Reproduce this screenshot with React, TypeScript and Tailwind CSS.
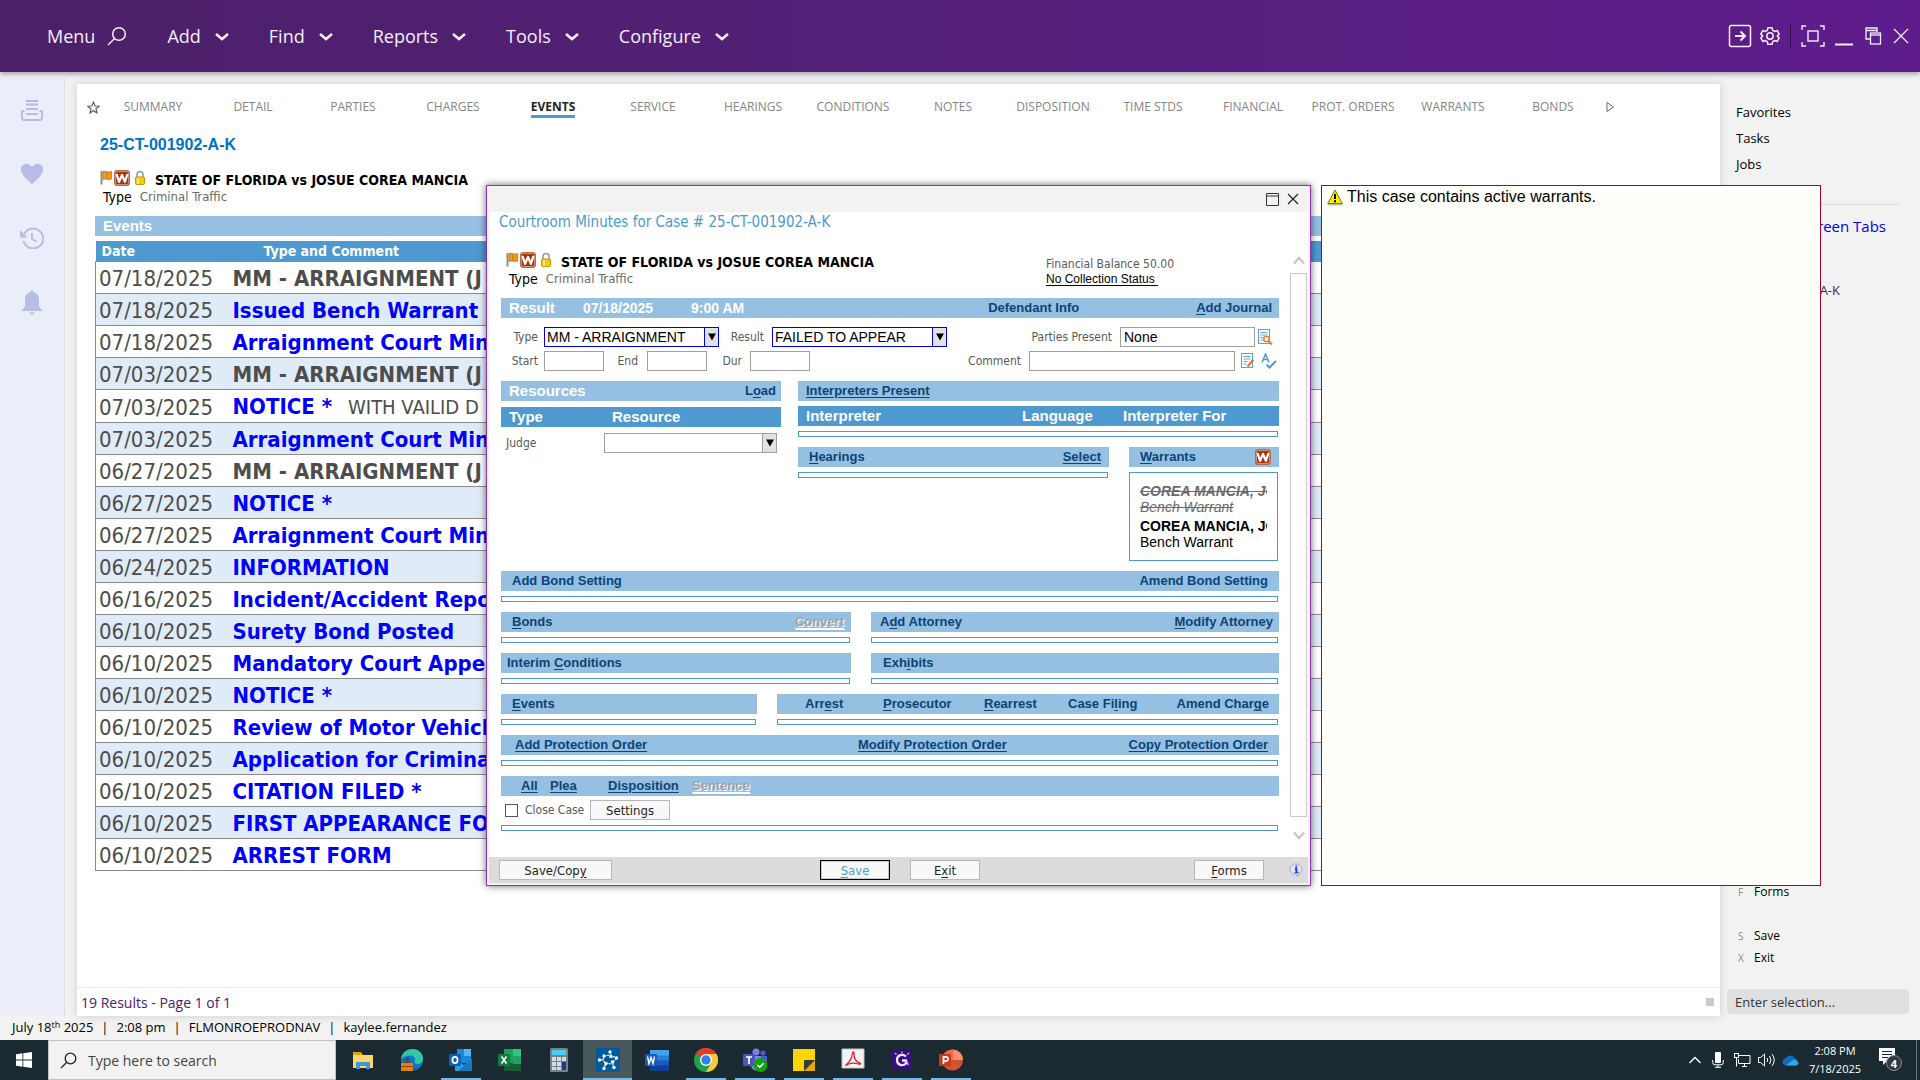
import type { ReactNode } from 'react';

import clsx from 'clsx';

const TABS = [
  'SUMMARY',
  'DETAIL',
  'PARTIES',
  'CHARGES',
  'EVENTS',
  'SERVICE',
  'HEARINGS',
  'CONDITIONS',
  'NOTES',
  'DISPOSITION',
  'TIME STDS',
  'FINANCIAL',
  'PROT. ORDERS',
  'WARRANTS',
  'BONDS',
];

const MENUS = ['Add', 'Find', 'Reports', 'Tools', 'Configure'];

type EventRow = { date: string; title: string; comment?: string; plain?: boolean };

const EVENTS: EventRow[] = [
  { date: '07/18/2025', title: 'MM - ARRAIGNMENT (J', plain: true },
  { date: '07/18/2025', title: 'Issued Bench Warrant' },
  { date: '07/18/2025', title: 'Arraignment Court Min' },
  { date: '07/03/2025', title: 'MM - ARRAIGNMENT (J', plain: true },
  { date: '07/03/2025', title: 'NOTICE *', comment: 'WITH VAILID D' },
  { date: '07/03/2025', title: 'Arraignment Court Min' },
  { date: '06/27/2025', title: 'MM - ARRAIGNMENT (J', plain: true },
  { date: '06/27/2025', title: 'NOTICE *' },
  { date: '06/27/2025', title: 'Arraignment Court Min' },
  { date: '06/24/2025', title: 'INFORMATION' },
  { date: '06/16/2025', title: 'Incident/Accident Repo' },
  { date: '06/10/2025', title: 'Surety Bond Posted' },
  { date: '06/10/2025', title: 'Mandatory Court Appea' },
  { date: '06/10/2025', title: 'NOTICE *' },
  { date: '06/10/2025', title: 'Review of Motor Vehicl' },
  { date: '06/10/2025', title: 'Application for Crimina' },
  { date: '06/10/2025', title: 'CITATION FILED *' },
  { date: '06/10/2025', title: 'FIRST APPEARANCE FO' },
  { date: '06/10/2025', title: 'ARREST FORM' },
];

// "&" marks the access key letter
function Mnemonic({ text }: { text: string }) {
  const at = text.indexOf('&');
  if (at < 0) return <>{text}</>;
  return (
    <>
      {text.slice(0, at)}
      <span className="underline underline-offset-2">{text[at + 1]}</span>
      {text.slice(at + 2)}
    </>
  );
}

function BarLink({
  text,
  underlined,
  disabled,
}: {
  text: string;
  underlined?: boolean;
  disabled?: boolean;
}) {
  return (
    <a
      href="#"
      className={clsx(
        'justify-self-start text-[13px] leading-5 font-bold whitespace-nowrap',
        disabled
          ? 'text-[#a3a3a3] decoration-white [text-shadow:1px_1px_0_#fff]'
          : 'text-[#0b4475]',
        underlined && 'underline underline-offset-2',
      )}
    >
      <Mnemonic text={text} />
    </a>
  );
}

function Bar({ className, children }: { className?: string; children?: ReactNode }) {
  return <div className={clsx('h-5 items-center bg-[#95c0e2]', className)}>{children}</div>;
}

function Strip() {
  return <div className="mt-[5px] mr-px h-[6px] border border-[#4e99cf]" />;
}

function DropDown({
  id,
  value,
  required,
  className,
}: {
  id: string;
  value: string;
  required?: boolean;
  className?: string;
}) {
  const edge = required ? 'border-[#0000e6]' : 'border-[#a0a0a0]';
  return (
    <div className={clsx('flex h-5 border bg-white', edge, className)}>
      <select
        id={id}
        defaultValue={value}
        className="min-w-0 flex-1 appearance-none pl-[2px] text-[14px] leading-[18px] text-black outline-none"
      >
        <option value={value}>{value}</option>
      </select>
      <span
        className={clsx(
          'pointer-events-none flex w-[14px] items-center justify-center border-l bg-[#e1e1e6]',
          edge,
        )}
      >
        <svg width="8" height="8" viewBox="0 0 8 8">
          <path d="M0 0.5h8L4 7.5z" fill="#000" />
        </svg>
      </span>
    </div>
  );
}

function TextBox({ id, value, className }: { id: string; value?: string; className?: string }) {
  return (
    <input
      id={id}
      type="text"
      defaultValue={value}
      className={clsx(
        'h-5 border border-[#a0a0a0] bg-white pl-[3px] text-[14px] text-black outline-none',
        className,
      )}
    />
  );
}

function Label({
  htmlFor,
  className,
  children,
}: {
  htmlFor: string;
  className?: string;
  children: ReactNode;
}) {
  return (
    <label
      htmlFor={htmlFor}
      className={clsx(
        "font-['DejaVu_Sans_Condensed','Noto_Sans',sans-serif] text-[12px] leading-5 whitespace-nowrap text-[#5a5a5a]",
        className,
      )}
    >
      {children}
    </label>
  );
}

function PushButton({
  text,
  className,
  primary,
}: {
  text: string;
  className?: string;
  primary?: boolean;
}) {
  return (
    <button
      type="button"
      className={clsx(
        "h-5 border bg-[#f8f8f8] pt-px font-['DejaVu_Sans_Condensed','Noto_Sans',sans-serif] text-[13px] leading-[17px]",
        primary
          ? 'border-black text-[#4aa0e0] ring-1 ring-[#c8c8c8] ring-inset'
          : 'border-[#b8b8b8] text-[#222]',
        className,
      )}
    >
      <Mnemonic text={text} />
    </button>
  );
}

function WarrantIcon() {
  return (
    <svg width="16" height="16" viewBox="0 0 16 16">
      <rect x="0.5" y="0.5" width="15" height="15" rx="2.5" fill="#a5360f" stroke="#b5694e" />
      <rect x="1.500" y="1.500" width="13" height="13" rx="1.500" fill="none" stroke="#e0b3a2" strokeWidth="0.700" />
      <path
        d="M2.500 4l2.600 7.800L8 5l2.900 6.800L13.500 4"
        fill="none"
        stroke="#fff"
        strokeWidth="2.200"
        strokeLinejoin="round"
      />
    </svg>
  );
}

function FlagIcon() {
  return (
    <svg width="13" height="16" viewBox="0 0 13 16">
      <path d="M1.500 1v13.500" stroke="#8d8d85" strokeWidth="2" />
      <path d="M3 1.500c2-1 4 1.500 8.500 0v7.500c-3 1.500-5-1-8.500 0.500z" fill="#f09a1c" stroke="#b76a0c" strokeWidth="0.700" />
      <path d="M7 2v7" stroke="#c9750c" />
    </svg>
  );
}

function LockIcon() {
  return (
    <svg width="12" height="16" viewBox="0 0 12 16">
      <path d="M3 8V4.500a3 3 0 0 1 6 0V8" fill="none" stroke="#9b9b9b" strokeWidth="1.600" />
      <rect x="1.500" y="7" width="9" height="7.500" rx="1" fill="#f3cc12" stroke="#c79a05" />
      <path d="M4 8v6" stroke="#fbef9b" strokeWidth="1.500" />
    </svg>
  );
}

function CaseHeading() {
  return (
    <div className="font-['DejaVu_Sans_Condensed','Noto_Sans',sans-serif]">
      <div className="flex h-[18px] items-start">
        <FlagIcon />
        <span className="ml-px">
          <WarrantIcon />
        </span>
        <span className="ml-1">
          <LockIcon />
        </span>
        <span className="ml-[9px] pt-[2px] text-[14px] leading-4 font-bold whitespace-nowrap text-black">
          STATE OF FLORIDA vs JOSUE COREA MANCIA
        </span>
      </div>
      <div className="flex gap-2 pl-[3px] text-[14px] leading-[18px]">
        <span className="text-black">Type</span>
        <span className="text-[13px] text-[#6a6a6a]">Criminal Traffic</span>
      </div>
    </div>
  );
}

function TopBar() {
  return (
    <header className="relative z-10 flex h-[72px] items-center justify-between bg-linear-to-r from-[#4b2068] to-[#5e1c8c] pr-2 pl-[47px] text-[#f4effa] shadow-[0_2px_5px_rgba(0,0,0,0.35)]">
      <nav className="flex items-center gap-10 text-[18px] leading-6">
        <button type="button" className="flex items-center gap-3">
          Menu
          <svg width="20" height="20" viewBox="0 0 20 20" fill="none" stroke="currentColor" strokeWidth="1.500">
            <circle cx="12" cy="8" r="6.300" />
            <path d="M7.500 12.500L1 19" />
          </svg>
        </button>
        {MENUS.map((m) => (
          <button type="button" key={m} className="flex items-center gap-[14px]">
            {m}
            <svg width="14" height="9" viewBox="0 0 14 9" fill="none" stroke="currentColor" strokeWidth="2.500">
              <path d="M1 2l6 5 6-5" />
            </svg>
          </button>
        ))}
      </nav>
      <div className="flex items-center">
        <button type="button" aria-label="Sign out">
          <svg width="24" height="24" viewBox="0 0 24 24" fill="none" stroke="currentColor" strokeWidth="1.500">
            <rect x="1.500" y="1.500" width="21" height="21" rx="2" />
            <path d="M7 12h10M12.500 7.500L17 12l-4.500 4.500" strokeWidth="2" />
          </svg>
        </button>
        <button type="button" aria-label="Settings" className="ml-2">
          <svg width="20" height="20" viewBox="0 0 24 24" fill="none" stroke="currentColor" strokeWidth="1.800">
            <path d="M9.500 2h5l.8 3.200 2.200 1.300 3.200-1L23 9.800l-2.300 2.200L23 14.300l-2.300 4.200-3.200-1-2.200 1.300-.8 3.200h-5l-.8-3.200-2.200-1.300-3.200 1L1 14.300 3.300 12 1 9.800l2.300-4.300 3.200 1 2.200-1.300z" strokeLinejoin="round" />
            <circle cx="12" cy="12" r="3.800" />
          </svg>
        </button>
        <span className="mx-[10px] h-6 w-px bg-[#33104f]" />
        <button type="button" aria-label="Full screen">
          <svg width="24" height="22" viewBox="0 0 24 22" fill="none" stroke="currentColor" strokeWidth="1.400">
            <path d="M1 5V1h4M19 1h4v4M23 17v4h-4M5 21H1v-4" />
            <rect x="7" y="6" width="10" height="10" />
          </svg>
        </button>
        <button type="button" aria-label="Minimize" className="ml-[10px]">
          <svg width="18" height="20" viewBox="0 0 18 20">
            <path d="M0 18.500h18" stroke="currentColor" strokeWidth="2" />
          </svg>
        </button>
        <button type="button" aria-label="Restore" className="ml-3">
          <svg width="17" height="18" viewBox="0 0 17 18" fill="none" stroke="currentColor" strokeWidth="1.300">
            <path d="M5 12H1V1h11v4M1 3.500h11" />
            <rect x="5.500" y="6" width="10" height="11" />
            <path d="M5.500 8h10" />
          </svg>
        </button>
        <button type="button" aria-label="Close" className="ml-2 px-[3px]">
          <svg width="16" height="16" viewBox="0 0 16 16">
            <path d="M1 1l14 14M15 1L1 15" stroke="currentColor" strokeWidth="1.300" />
          </svg>
        </button>
      </div>
    </header>
  );
}

function SideRail() {
  return (
    <aside className="mt-[6px] flex w-[65px] shrink-0 flex-col items-center border-r border-[#dfe0e6] bg-[#ebedf8] pt-[22px] text-[#b6bee6]">
      <svg width="22" height="21" viewBox="0 0 22 21" fill="none" stroke="currentColor" strokeWidth="2">
        <path d="M5 1h12M5 4.500h12M5 9h12M5 14h12" />
        <path d="M3.500 11H1v7q0 2 2 2h16q2 0 2-2v-7h-2.500" />
      </svg>
      <svg width="24" height="22" viewBox="0 0 26 23" className="mt-[42px]">
        <path d="M13 22.500C6 16 1 12 1 6.500 1 3 3.500 0.500 7 0.500c2.500 0 4.700 1.500 6 3.500 1.300-2 3.500-3.500 6-3.500 3.500 0 6 2.500 6 6C25 12 20 16 13 22.500z" fill="currentColor" />
      </svg>
      <svg width="24" height="22" viewBox="0 0 24 22" fill="none" stroke="currentColor" strokeWidth="2" className="mt-[42px]">
        <path d="M4 7.500A10 10 0 1 1 3.500 14" />
        <path d="M0 3v7.500h7.500z" fill="currentColor" stroke="none" />
        <path d="M12 6v6l4.500 2.500" />
      </svg>
      <svg width="22" height="25" viewBox="0 0 22 25" fill="currentColor" className="mt-[41px]">
        <path d="M11 0.500c1 0 1.700.7 1.700 1.700C16.500 3 18 6 18 10v6l3.500 5H.5l3.500-5v-6c0-4 1.500-7 5.300-7.800 0-1 .7-1.700 1.700-1.700z" />
        <path d="M8.500 22.500h5c0 1.200-1 2-2.500 2s-2.500-.8-2.500-2z" />
      </svg>
    </aside>
  );
}

function TabStrip() {
  return (
    <nav className="flex h-[46px] items-center text-[12px] leading-4 text-[#858585]">
      <span className="flex w-[26px] justify-end pr-[3px]">
        <svg width="13" height="13" viewBox="0 0 24 24" fill="none" stroke="#555" strokeWidth="2">
          <path d="M12 2l2.900 7.200 7.600.6-5.900 4.900 1.900 7.500L12 18l-6.500 4.200 1.900-7.500L1.500 9.800l7.600-.6z" />
        </svg>
      </span>
      {TABS.map((t) => (
        <span key={t} className="flex w-[100px] shrink-0 justify-center">
          <a
            href="#"
            className={clsx(
              'border-b-[3px] pt-[3px] whitespace-nowrap',
              t === 'EVENTS' ? 'border-[#4e99cf] font-bold text-[#222]' : 'border-transparent',
            )}
          >
            {t}
          </a>
        </span>
      ))}
      <svg width="9" height="12" viewBox="0 0 9 12" fill="none" stroke="#666" className="ml-[3px]">
        <path d="M1 1.500v9L7.500 6z" />
      </svg>
    </nav>
  );
}

function EventsTable() {
  return (
    <table className="mt-[5px] w-full table-fixed border-collapse font-['DejaVu_Sans_Condensed','Noto_Sans',sans-serif]">
      <thead>
        <tr className="h-5 bg-[#4e99cf] text-left text-[14px] leading-5 text-white">
          <th className="w-[134px] p-0 pl-[6px]">Date</th>
          <th className="p-0 pl-[34px]">Type and Comment</th>
        </tr>
      </thead>
      <tbody>
        {EVENTS.map((e, i) => (
          <tr
            key={i}
            className="h-8 border border-[#8a8a8a] text-[22px] leading-[29px] text-[#4d4d4d] even:bg-[#dfebf6]"
          >
            <td className="p-0 pt-[2px] pl-[3px]">{e.date}</td>
            <td className="overflow-hidden p-0 pt-[2px] pl-[3px] whitespace-nowrap">
              <a href="#" className={clsx('font-bold', !e.plain && 'text-[#0000fa]')}>
                {e.title}
              </a>
              {e.comment && <span className="ml-4 text-[20px]">{e.comment}</span>}
            </td>
          </tr>
        ))}
      </tbody>
    </table>
  );
}

function MainPanel() {
  return (
    <main className="mt-3 mb-0 ml-3 flex min-w-0 flex-1 flex-col bg-white shadow-[0_0_9px_rgba(0,0,0,0.15)]">
      <TabStrip />
      <div className="flex-1 pr-8 pl-[18px]">
        <h1 className="mt-[5px] pl-[5px] font-['Liberation_Sans',sans-serif] text-[16px] leading-5 font-bold text-[#0072c6]">
          25-CT-001902-A-K
        </h1>
        <div className="mt-[15px] pl-[5px]">
          <CaseHeading />
        </div>
        <div className="mt-[10px] h-5 bg-[#95c0e2] pl-2 font-['Liberation_Sans',sans-serif] text-[15px] leading-5 font-bold text-white">
          Events
        </div>
        <EventsTable />
      </div>
      <footer className="flex h-[29px] items-center justify-between border-t border-[#ececec] pr-[6px] pl-1 text-[14px] text-[#4b2068]">
        <span>19 Results - Page 1 of 1</span>
        <span className="size-2 bg-[#c8c8c8]" />
      </footer>
    </main>
  );
}

function CommandPanel() {
  return (
    <aside className="flex w-[200px] shrink-0 flex-col pt-[27px] text-[13px] text-black">
      <ul className="pl-4 leading-[26px]">
        <li>Favorites</li>
        <li>Tasks</li>
        <li>Jobs</li>
      </ul>
      <hr className="mt-[27px] mr-5 border-[#dedede]" />
      <div className="mr-[34px] pt-[9px] text-right text-[15px] leading-6 text-[#0000e6]">Screen Tabs</div>
      <div className="mt-[42px] mr-20 text-right leading-5 text-[#4b2068]">25-CT-001902-A-K</div>
      <dl className="mt-auto grid grid-cols-[16px_1fr] pl-[18px] leading-[22px]">
        <dt className="text-[10px] text-[#8a8a8a]">F</dt>
        <dd className="pb-[22px] text-[12px]">Forms</dd>
        <dt className="text-[10px] text-[#8a8a8a]">S</dt>
        <dd className="text-[12px]">Save</dd>
        <dt className="text-[10px] text-[#8a8a8a]">X</dt>
        <dd className="text-[12px]">Exit</dd>
      </dl>
      <input
        type="text"
        aria-label="Selection"
        placeholder="Enter selection..."
        className="mt-5 mr-[11px] mb-[2px] ml-[7px] h-[25px] rounded bg-[#e0e0e0] pl-2 text-[13px] outline-none placeholder:text-[#333]"
      />
    </aside>
  );
}

function ResultSection() {
  return (
    <>
      <Bar className="mt-[9px] flex pr-[7px] pl-2 text-[14px] font-bold text-white">
        <span className="w-[74px] text-[15px]">Result</span>
        <span className="w-[108px]">07/18/2025</span>
        <span>9:00 AM</span>
        <span className="ml-auto flex gap-[117px]">
          <BarLink text="Defendant Info" />
          <BarLink text="&Add Journal" />
        </span>
      </Bar>
      <div className="mt-[9px] flex pr-[6px]">
        <Label htmlFor="type" className="w-[37px] text-right">
          Type
        </Label>
        <DropDown id="type" value="MM - ARRAIGNMENT" required className="ml-[6px] w-[175px]" />
        <Label htmlFor="result" className="w-[45px] text-right">
          Result
        </Label>
        <DropDown id="result" value="FAILED TO APPEAR" required className="ml-2 w-[175px]" />
        <Label htmlFor="parties" className="ml-auto pr-2">
          Parties Present
        </Label>
        <TextBox id="parties" value="None" className="w-[135px]" />
        <button type="button" aria-label="Look up parties" className="ml-[2px]">
          <svg width="16" height="16" viewBox="0 0 16 16" fill="none" stroke="#5aa3d6">
            <rect x="1.500" y="0.500" width="11" height="14" />
            <path d="M3.500 3.500h7M3.500 6h7M3.500 8.500h3M3.500 11h3" />
            <circle cx="9.500" cy="10" r="2.700" stroke="#e5762f" strokeWidth="1.300" />
            <path d="M11.500 12l3.500 3.500" stroke="#e5762f" strokeWidth="2" />
          </svg>
        </button>
      </div>
      <div className="mt-1 flex pr-[2px]">
        <Label htmlFor="start" className="w-[37px] text-right">
          Start
        </Label>
        <TextBox id="start" className="ml-[6px] w-[60px]" />
        <Label htmlFor="end" className="w-[34px] text-right">
          End
        </Label>
        <TextBox id="end" className="ml-[9px] w-[60px]" />
        <Label htmlFor="dur" className="w-[35px] text-right">
          Dur
        </Label>
        <TextBox id="dur" className="ml-2 w-[60px]" />
        <Label htmlFor="comment" className="ml-auto pr-2">
          Comment
        </Label>
        <TextBox id="comment" className="w-[206px]" />
        <button type="button" aria-label="Edit comment" className="ml-[5px]">
          <svg width="16" height="16" viewBox="0 0 16 16" fill="none" stroke="#5aa3d6">
            <rect x="1.500" y="0.500" width="11" height="14" />
            <path d="M3.500 3.500h7M3.500 6h7M3.500 8.500h4M3.500 11h3" />
            <path d="M7.500 13.500l6-7" stroke="#e5762f" strokeWidth="2.200" />
          </svg>
        </button>
        <button type="button" aria-label="Check spelling" className="ml-[5px]">
          <svg width="16" height="16" viewBox="0 0 16 16" fill="none" stroke="#4e99cf" strokeWidth="1.500">
            <path d="M1 9.500L4.500 1 8 9.500M2.500 6.500h4.500" />
            <path d="M5.500 11.500l3 3L15 8" strokeWidth="2" />
          </svg>
        </button>
      </div>
    </>
  );
}

function ResourcesSection() {
  return (
    <section className="w-[280px]">
      <Bar className="flex justify-between pr-[5px] pl-2 text-[15px] font-bold text-white">
        <span>Resources</span>
        <BarLink text="L&oad" />
      </Bar>
      <div className="mt-[6px] grid h-5 grid-cols-[103px_1fr] bg-[#4e99cf] pl-2 text-[15px] leading-5 font-bold text-white">
        <span>Type</span>
        <span>Resource</span>
      </div>
      <div className="mt-[6px] flex justify-between pr-1 pl-[5px]">
        <Label htmlFor="judge">Judge</Label>
        <DropDown id="judge" value="" className="w-[173px]" />
      </div>
    </section>
  );
}

function InterpretersSection() {
  return (
    <section className="ml-[17px] flex-1">
      <Bar className="flex pl-2">
        <BarLink text="Interpreters Present" underlined />
      </Bar>
      <div className="mt-[5px] grid h-5 grid-cols-[216px_101px_1fr] bg-[#4e99cf] pl-2 text-[15px] leading-5 font-bold text-white">
        <span>Interpreter</span>
        <span>Language</span>
        <span>Interpreter For</span>
      </div>
      <Strip />
      <div className="mt-[10px] flex gap-5">
        <div className="flex-1">
          <Bar className="flex justify-between pr-2 pl-[11px]">
            <BarLink text="&Hearings" />
            <BarLink text="Select" underlined />
          </Bar>
          <Strip />
        </div>
        <div className="w-[150px]">
          <Bar className="flex justify-between pr-2 pl-[11px]">
            <BarLink text="&Warrants" />
            <WarrantIcon />
          </Bar>
          <div className="mt-[5px] mr-px h-[89px] border border-[#4e99cf] pt-[10px] pr-[10px] pl-[10px] text-[14px] leading-4">
            <div className="overflow-hidden whitespace-nowrap text-[#6a6a6a] italic line-through">
              <b>COREA MANCIA, JOSUE</b>
              <div>Bench Warrant</div>
            </div>
            <div className="mt-[3px] overflow-hidden whitespace-nowrap text-black">
              <b>COREA MANCIA, JOSUE</b>
              <div>Bench Warrant</div>
            </div>
          </div>
        </div>
      </div>
    </section>
  );
}

function MinutesDialog() {
  return (
    <div
      role="dialog"
      aria-label="Courtroom Minutes"
      className="absolute top-[185px] left-[486px] z-20 flex h-[701px] w-[825px] flex-col border border-[#8f35b5] bg-[#f2f2f2] px-[2px] pb-[2px] font-['Liberation_Sans',sans-serif] shadow-[0_0_7px_rgba(0,0,0,0.6)]"
    >
      <div className="flex h-[26px] shrink-0 items-center justify-end gap-2 pr-[9px]">
        <button type="button" aria-label="Maximize">
          <svg width="13" height="13" viewBox="0 0 13 13" fill="none" stroke="#333">
            <path d="M0.500 0.500h12v12H0.500zM0.500 3h12" />
          </svg>
        </button>
        <button type="button" aria-label="Close">
          <svg width="12" height="12" viewBox="0 0 12 12">
            <path d="M1 1l10 10M11 1L1 11" stroke="#222" strokeWidth="1.200" />
          </svg>
        </button>
      </div>
      <div className="flex min-h-0 flex-1 flex-col bg-white">
        <h2 className="pl-[10px] font-['DejaVu_Sans_Condensed','Noto_Sans',sans-serif] text-[15px] leading-5 text-[#4e99cf]">
          Courtroom Minutes for Case # 25-CT-001902-A-K
        </h2>
        <div className="flex min-h-0 flex-1">
          <div className="flex-1 pt-5 pl-3">
            <div className="flex pl-[5px]">
              <div className="w-[540px]">
                <CaseHeading />
              </div>
              <div className="pt-[5px] leading-[15px]">
                <div className="font-['DejaVu_Sans_Condensed','Noto_Sans',sans-serif] text-[12px] text-[#5a5a5a]">
                  Financial Balance 50.00
                </div>
                <a href="#" className="block text-[12px] whitespace-pre text-black underline underline-offset-2">
                  {'No Collection Status '}
                </a>
              </div>
            </div>
            <div className="pt-px">
              <ResultSection />
            </div>
            <div className="mt-[10px] flex">
              <ResourcesSection />
              <InterpretersSection />
            </div>
            <Bar className="mt-[10px] flex justify-between pr-[11px] pl-[11px]">
              <BarLink text="Add Bond Setting" />
              <BarLink text="Amend Bond Setting" />
            </Bar>
            <Strip />
            <div className="mt-[10px] grid grid-cols-[350px_1fr] gap-x-5 gap-y-[10px]">
              <div>
                <Bar className="flex justify-between pr-[7px] pl-[11px]">
                  <BarLink text="&Bonds" />
                  <BarLink text="Convert" underlined disabled />
                </Bar>
                <Strip />
              </div>
              <div>
                <Bar className="flex justify-between pr-[6px] pl-[9px]">
                  <BarLink text="A&dd Attorney" />
                  <BarLink text="&Modify Attorney" />
                </Bar>
                <Strip />
              </div>
              <div>
                <Bar className="flex pl-[6px]">
                  <BarLink text="Interim &Conditions" />
                </Bar>
                <Strip />
              </div>
              <div>
                <Bar className="flex pl-3">
                  <BarLink text="Exh&ibits" />
                </Bar>
                <Strip />
              </div>
            </div>
            <div className="mt-[10px] grid grid-cols-[256px_1fr] gap-x-5">
              <div>
                <Bar className="flex pl-[11px]">
                  <BarLink text="&Events" />
                </Bar>
                <Strip />
              </div>
              <div>
                <Bar className="grid grid-cols-[78px_101px_84px_1fr_auto] pr-[10px] pl-7">
                  <BarLink text="Arr&est" />
                  <BarLink text="&Prosecutor" />
                  <BarLink text="&Rearrest" />
                  <BarLink text="Case Fi&ling" />
                  <BarLink text="Amend Char&ge" />
                </Bar>
                <Strip />
              </div>
            </div>
            <Bar className="mt-[10px] grid grid-cols-[343px_1fr_auto] pr-[11px] pl-[14px]">
              <BarLink text="Add Protection Order" underlined />
              <BarLink text="Modify Protection Order" underlined />
              <BarLink text="Copy Protection Order" underlined />
            </Bar>
            <Strip />
            <Bar className="mt-[10px] grid grid-cols-[29px_58px_84px_1fr] pl-5">
              <BarLink text="All" underlined />
              <BarLink text="Plea" underlined />
              <BarLink text="Disposition" underlined />
              <BarLink text="Sentence" underlined disabled />
            </Bar>
            <div className="mt-1 flex items-center pl-1">
              <input
                id="close-case"
                type="checkbox"
                className="size-[13px] appearance-none border border-[#555] bg-white"
              />
              <Label htmlFor="close-case" className="w-[72px] pl-[7px]">
                Close Case
              </Label>
              <PushButton text="Settings" className="w-20" />
            </div>
            <Strip />
          </div>
          <div className="mr-px ml-[11px] flex w-[17px] flex-col items-center pt-[24px] pb-[17px]">
            <svg width="12" height="9" viewBox="0 0 12 9" fill="none" stroke="#c8c8c8" strokeWidth="2.500">
              <path d="M1 7.500L6 2l5 5.500" />
            </svg>
            <div className="mt-2 w-full flex-1 border border-[#c8c8c8]" />
            <svg width="12" height="9" viewBox="0 0 12 9" fill="none" stroke="#c8c8c8" strokeWidth="2.500" className="mt-[14px]">
              <path d="M1 1.500L6 7l5-5.500" />
            </svg>
          </div>
        </div>
      </div>
      <div className="flex h-[26px] shrink-0 items-center bg-[#dcdcdc] pr-1 pl-[10px]">
        <PushButton text="Save/Cop&y" className="w-[113px]" />
        <PushButton text="&Save" primary className="ml-auto w-[70px]" />
        <PushButton text="E&xit" className="ml-5 w-[70px]" />
        <PushButton text="&Forms" className="ml-[214px] w-[70px]" />
        <svg width="15" height="15" viewBox="0 0 15 15" className="ml-[25px]">
          <path d="M7 1c3.500 0 6 2 6 5s-1.500 4-3 4.700L8.500 14 8 11.500C3.500 11.800 1 9.500 1 6.300 1 3 3.500 1 7 1z" fill="#e4e4f6" stroke="#a6a6cf" />
          <path d="M7.300 2.500v2M6 5.500h1.500V9.500M5.500 9.500h4" stroke="#1f46c8" strokeWidth="1.700" />
        </svg>
      </div>
    </div>
  );
}

function WarningPanel() {
  return (
    <div
      role="alert"
      className="absolute top-[185px] left-[1321px] z-20 flex h-[701px] w-[500px] items-start border border-[#b0002e] bg-[#fffffa] px-[5px] pt-[1px] font-['Liberation_Sans',sans-serif] text-[16px] leading-5 text-black"
    >
      <svg width="16" height="17" viewBox="0 0 16 17" className="mt-[2px] mr-1">
        <path d="M8 1L15.300 14.500H0.700z" fill="#f7ee00" stroke="#77771b" strokeLinejoin="round" />
        <path d="M1 15.800h14.500" stroke="#9a9a9a" />
        <path d="M8 5v5M8 11.300v2" stroke="#000" strokeWidth="2" />
      </svg>
      This case contains active warrants.
    </div>
  );
}

function StatusBar() {
  return (
    <div className="flex h-6 items-center gap-2 pb-[2px] pl-3 text-[13px] leading-5 text-black">
      <span>
        July 18<sup className="text-[9px]">th</sup> 2025
      </span>
      <span>|</span>
      <span>2:08 pm</span>
      <span>|</span>
      <span>FLMONROEPRODNAV</span>
      <span>|</span>
      <span>kaylee.fernandez</span>
    </div>
  );
}

type TaskApp = { name: string; open?: boolean; active?: boolean; icon: ReactNode };

const APPS: TaskApp[] = [
  {
    name: 'File Explorer',
    icon: (
      <>
        <path d="M2 4h8l2 3h10v13H2z" fill="#e2a10b" />
        <path d="M2 7h20v13H2z" fill="#fcd56a" />
        <path d="M5 21v-7h14v7h-4v-3H9v3z" fill="#3d97de" />
      </>
    ),
  },
  {
    name: 'Edge',
    icon: (
      <>
        <circle cx="12" cy="12" r="11" fill="#0e76c4" />
        <path d="M1 11C2 4.500 7 1 12.500 1 19 1 23 6 23 10.500c0 4-3 5.500-5.500 5.500-2 0-3-1-3-2 2-4-1-6.500-4.500-6.500C6 7.500 2.500 9 1 11z" fill="#35c6a4" />
        <path d="M9 13c0 5 4 8 9 7.500-6 5-14 1-14-6 0-3 2-5 5-5.500-0.500 1 0 2.500 0 4z" fill="#14539d" />
        <rect x="1" y="15" width="12" height="8" rx="1" fill="#e0820f" />
        <path d="M4.500 15v-2h5v2" fill="none" stroke="#8c4a06" strokeWidth="1.500" />
        <path d="M1 18.500h12" stroke="#8c4a06" />
      </>
    ),
  },
  {
    name: 'Outlook',
    open: true,
    icon: (
      <>
        <path d="M8 1h14v14H8z" fill="#1a8ad8" />
        <path d="M15 1h7v7h-7z" fill="#50b7f2" />
        <path d="M6 11l9 6 8-6v12H6z" fill="#2d9be8" />
        <path d="M23 11v12H9z" fill="#1577c4" />
        <rect x="0" y="6" width="12" height="12" rx="1" fill="#0b62b5" />
        <ellipse cx="6" cy="12" rx="2.600" ry="3.100" fill="none" stroke="#fff" strokeWidth="1.700" />
      </>
    ),
  },
  {
    name: 'Excel',
    icon: (
      <>
        <path d="M6 1h17v22H6z" fill="#1f9e5a" />
        <path d="M15 1h8v7h-8z" fill="#33c481" />
        <path d="M6 15h17v8H6z" fill="#185c37" />
        <path d="M15 8h8v8h-8z" fill="#21a366" />
        <rect x="0" y="6" width="12" height="12" rx="1" fill="#107c41" />
        <path d="M3.500 8.500l5 7M8.500 8.500l-5 7" stroke="#fff" strokeWidth="1.700" />
      </>
    ),
  },
  {
    name: 'Calculator',
    icon: (
      <>
        <rect x="3" y="0" width="18" height="24" rx="1.500" fill="#75818b" />
        <rect x="5" y="2" width="14" height="5" fill="#43d1f7" />
        <path d="M5 9h4v4H5zM10 9h4v4h-4zM15 9h4v4h-4zM5 14h4v4H5zM10 14h4v4h-4zM5 19h4v3H5zM10 19h4v3h-4z" fill="#d6dbdf" />
        <path d="M15 14h4v8h-4z" fill="#173f7c" />
      </>
    ),
  },
  {
    name: 'Court Case Manager',
    open: true,
    active: true,
    icon: (
      <>
        <path d="M0 0h24v24H0z" fill="#015a9c" />
        <path d="M14 3l1 5 5 1.500M21 10l-4 4v6M15 16l-5-1-2 5M9 15l-2-3H3M7 12l1-4 6-1" fill="none" stroke="#fff" strokeWidth="1.200" strokeDasharray="2.500 1" />
        <g fill="#fff">
          <circle cx="14" cy="4" r="1.700" />
          <circle cx="20.500" cy="10" r="1.700" />
          <circle cx="18" cy="19.500" r="1.700" />
          <circle cx="8" cy="20.500" r="1.700" />
          <circle cx="3.500" cy="12" r="1.700" />
          <circle cx="8" cy="8" r="1.700" />
          <circle cx="10" cy="15.500" r="1.700" />
          <circle cx="16.500" cy="14" r="1.700" />
          <circle cx="15" cy="8.500" r="1.700" />
        </g>
      </>
    ),
  },
  {
    name: 'Word',
    icon: (
      <>
        <path d="M5 2h19v6H5z" fill="#41a5ee" />
        <path d="M5 7.500h19V13H5z" fill="#2b7cd3" />
        <path d="M5 12.500h19V18H5z" fill="#185abd" />
        <path d="M5 17.500h19V23H5z" fill="#103f91" />
        <rect x="0" y="6" width="12" height="12" rx="1" fill="#185abd" />
        <path d="M2.500 8.500l1.500 7 2-6 2 6 1.500-7" fill="none" stroke="#fff" strokeWidth="1.400" />
      </>
    ),
  },
  {
    name: 'Chrome',
    open: true,
    icon: (
      <>
        <circle cx="12" cy="12" r="12" fill="#1ea446" />
        <path d="M12 12L1.600 6A12 12 0 0 1 22.400 6z" fill="#e33b2e" />
        <path d="M12 6h10.400A12 12 0 0 1 12 24l5.200-9z" fill="#fcc934" />
        <circle cx="12" cy="12" r="6" fill="#fff" />
        <circle cx="12" cy="12" r="4.700" fill="#2f7fee" />
      </>
    ),
  },
  {
    name: 'Teams',
    open: true,
    icon: (
      <>
        <circle cx="13" cy="4" r="3.500" fill="#7b83eb" />
        <circle cx="20" cy="5" r="2.500" fill="#5059c9" />
        <path d="M8 8h11v9a5.500 5.500 0 0 1-11 0z" fill="#7b83eb" />
        <path d="M18 8h6v6q-3 3-6 1z" fill="#5059c9" />
        <rect x="0" y="6" width="12" height="12" rx="1" fill="#4b53bc" />
        <path d="M3 9h6M6 9v7" stroke="#fff" strokeWidth="1.700" />
        <circle cx="17.500" cy="17" r="7" fill="#13a10e" />
        <path d="M14.500 17l2.200 2.200 4-4" fill="none" stroke="#fff" strokeWidth="1.600" />
      </>
    ),
  },
  {
    name: 'Sticky Notes',
    open: true,
    icon: (
      <>
        <path d="M1 1h22v22H1z" fill="#fdd600" />
        <path d="M12 12h11v11H12z" fill="#e2aa00" />
        <path d="M12 12h11L12 23z" fill="#3b3a39" />
      </>
    ),
  },
  {
    name: 'Acrobat',
    open: true,
    icon: (
      <>
        <path d="M1 1h22v19H1z" fill="#f3f3f3" stroke="#c4c4c4" />
        <path d="M5 17c3-2 6-7 6.500-11.500 0-2 1.500-2 1.500 0C12.500 10 15 14 19 15c1.500.5 0 1.500-1.500 1-4-1.500-7-1-10 0-1.500 1-3 2-2.500 1z" fill="none" stroke="#dd2025" strokeWidth="1.300" />
      </>
    ),
  },
  {
    name: 'Screen Tool',
    open: true,
    icon: (
      <>
        <rect x="2" y="2" width="20" height="20" rx="4" fill="#35107c" />
        <path d="M16 8.500c-3-3-9-2-9 3.500s6 6.500 9 3.500v-3h-4" fill="none" stroke="#f1e4ff" strokeWidth="2.300" />
        <path d="M5 5l1.500 1.500M12 3.500v2M19 5l-1.500 1.500M16 12l2.500 5" stroke="#d7b8ff" strokeWidth="1.300" />
      </>
    ),
  },
  {
    name: 'PowerPoint',
    open: true,
    icon: (
      <>
        <circle cx="13.500" cy="12" r="10.500" fill="#d35230" />
        <path d="M13.500 1.500A10.500 10.500 0 0 1 24 12H13.500z" fill="#ff8f6b" />
        <path d="M3 12A10.500 10.500 0 0 1 13.500 1.500V12z" fill="#ed6c47" />
        <rect x="0" y="6" width="12" height="12" rx="1" fill="#c43e1c" />
        <path d="M4.500 16V8.800h2.300q2.200 0 2.200 2.200t-2.200 2.200H4.500" fill="none" stroke="#fff" strokeWidth="1.700" />
      </>
    ),
  },
];

function TaskBar() {
  return (
    <footer className="flex h-10 bg-[#1b2a30] text-white">
      <button type="button" aria-label="Start" className="flex w-12 items-center justify-center">
        <svg width="16" height="16" viewBox="0 0 16 16" fill="#fff">
          <path d="M0 2.200L6.500 1.300V7.600H0zM7.300 1.200L16 0v7.600H7.300zM0 8.400h6.500v6.300L0 13.800zM7.300 8.400H16V16l-8.700-1.200z" />
        </svg>
      </button>
      <label className="flex w-72 items-center gap-[11px] border border-[#c2c2c2] bg-[#f3f2f2] pl-[11px] text-[#444]">
        <svg width="17" height="17" viewBox="0 0 17 17" fill="none" stroke="#222" strokeWidth="1.300">
          <circle cx="10.500" cy="6.500" r="5.300" />
          <path d="M6.500 10.500L1 16" />
        </svg>
        <input
          type="text"
          placeholder="Type here to search"
          aria-label="Type here to search"
          className="min-w-0 flex-1 text-[14px] outline-none placeholder:text-[#444]"
        />
      </label>
      <div className="ml-[2px] flex">
        {APPS.map((app) => (
          <button
            type="button"
            key={app.name}
            aria-label={app.name}
            className={clsx(
              'flex w-[49px] flex-col items-center pt-2',
              app.active && 'bg-[#4a575b]',
            )}
          >
            <svg width="24" height="24" viewBox="0 0 24 24">
              {app.icon}
            </svg>
            <span className={clsx('mt-[6px] h-[2px]', app.active ? 'w-full' : 'w-10', app.open && 'bg-[#76b9ed]')} />
          </button>
        ))}
      </div>
      <div className="ml-auto flex items-center pr-[3px]">
        <svg width="12" height="8" viewBox="0 0 12 8" fill="none" stroke="#fff" strokeWidth="1.300">
          <path d="M0.500 7L6 1.500 11.500 7" />
        </svg>
        <svg width="12" height="16" viewBox="0 0 12 16" className="ml-[11px]">
          <rect x="3" y="0" width="6" height="11" rx="1" fill="#fff" />
          <path d="M0.700 8v2.500q0 2.300 2.300 2.300h6q2.300 0 2.300-2.300V8M6 13v2.500M3 15.300h6" fill="none" stroke="#fff" />
        </svg>
        <svg width="17" height="14" viewBox="0 0 17 14" fill="none" stroke="#fff" className="ml-[10px]">
          <path d="M5 2.500h11v8H4.500V6M8 13.500h5M10.500 10.500v3" />
          <rect x="0.500" y="0.500" width="4" height="4" />
          <path d="M2.500 5v8.500" />
        </svg>
        <svg width="18" height="14" viewBox="0 0 18 14" fill="none" stroke="#fff" className="ml-[7px]">
          <path d="M0.500 4.500h2L6.500 1v12l-4-3.500h-2zM9 5q1.500 2 0 4M11.500 3q3 4 0 8M14 1q4.500 6 0 12" />
        </svg>
        <svg width="17" height="11" viewBox="0 0 17 11" className="ml-[6px]">
          <path d="M4 10.500a3.700 3.700 0 0 1-.3-7.300A5 5 0 0 1 12.500 3 4 4 0 0 1 13 10.500z" fill="#0f6cbf" />
          <path d="M4 10.500L10 5.500q3-1.500 5 .3 3 3-.5 4.700z" fill="#28a8ea" />
        </svg>
        <div className="ml-[6px] w-[60px] text-center text-[11px] leading-[18px]">
          <div>2:08 PM</div>
          <div>7/18/2025</div>
        </div>
        <div className="relative ml-[14px] h-6 w-6">
          <svg width="16" height="17" viewBox="0 0 16 17">
            <path d="M0 0h16v13H8l-4 4v-4H0z" fill="#fff" />
            <path d="M3 3.500h10M3 6.500h10M3 9.500h6" stroke="#1b2a30" />
          </svg>
          <span className="absolute top-[7px] left-[7px] flex size-4 items-center justify-center rounded-full border border-[#8c8c8c] bg-[#2e3a3f] text-[11px] leading-none font-bold">
            4
          </span>
        </div>
        <span className="ml-[13px] h-10 w-px bg-[#6d777b]" />
      </div>
    </footer>
  );
}

export default function App() {
  return (
    <div className="relative flex min-h-screen flex-col overflow-hidden bg-[#f2f2f2] font-['Open_Sans',sans-serif]">
      <TopBar />
      <div className="flex flex-1">
        <SideRail />
        <MainPanel />
        <CommandPanel />
      </div>
      <StatusBar />
      <TaskBar />
      <MinutesDialog />
      <WarningPanel />
    </div>
  );
}
